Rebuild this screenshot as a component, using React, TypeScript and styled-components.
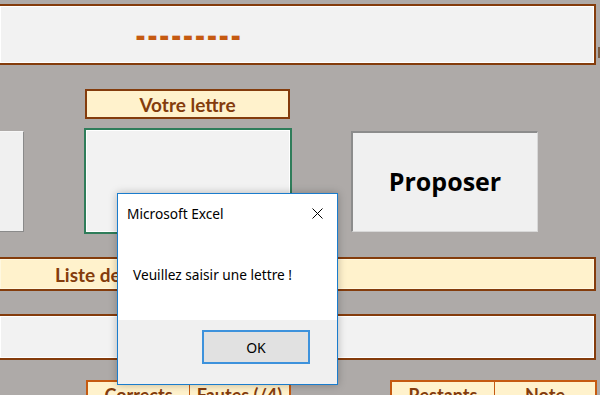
import React from "react";
import styled, { createGlobalStyle } from "styled-components";

const Global = createGlobalStyle`
  html, body { margin: 0; padding: 0; }
  body { background: #aeaaa8; font-family: "Open Sans", "Noto Sans", sans-serif; }
`;

const Sheet = styled.div`
  position: relative;
  width: 600px;
  height: 395px;
  overflow: hidden;
  background: #aeaaa8;
  padding-top: 4px;
  box-sizing: border-box;
`;

const WordPanel = styled.div`
  box-sizing: border-box;
  width: 598px;
  height: 61px;
  margin-left: -2px;
  background: #f2f2f2;
  border: 2px solid #843c0c;
  box-shadow: inset 0 0 0 1px #ffffff;
  padding-left: 136px;
  display: flex;
  align-items: center;
`;

const Dashes = styled.span`
  font-family: "Open Sans", sans-serif;
  font-weight: 800;
  font-size: 28px;
  letter-spacing: 3px;
  color: #c55a11;
  line-height: 1;
  margin-top: -2px;
`;

const EdgeMark = styled.div`
  position: absolute;
  right: 0;
  top: 47px;
  width: 2px;
  height: 11px;
  background: #7a5a40;
`;

const LabelRow = styled.div`
  margin-top: 24px;
  padding-left: 85px;
  display: flex;
`;

const Label = styled.div<{ $w: number }>`
  box-sizing: border-box;
  width: ${(p) => p.$w}px;
  height: 30px;
  background: #fff2cc;
  border: 2px solid #843c0c;
  color: #843c0c;
  font-family: "Lato", sans-serif;
  font-weight: 700;
  font-size: 19px;
  display: flex;
  align-items: center;
  justify-content: center;
`;

const InputRow = styled.div`
  margin-top: 9px;
  height: 106px;
  display: flex;
  align-items: center;
`;

const SideBox = styled.div`
  box-sizing: border-box;
  width: 24px;
  height: 101px;
  background: #f0f0f0;
  border: 1px solid #8a8a8a;
  border-left: none;
  border-top-color: #f7f7f7;
`;

const LetterInput = styled.div`
  box-sizing: border-box;
  margin-left: 60px;
  width: 208px;
  height: 106px;
  background: #f2f2f2;
  border: 2px solid #2f7d5a;
  box-shadow: inset 0 0 0 1px #ffffff;
`;

const ProposeButton = styled.button`
  box-sizing: border-box;
  margin-left: 59px;
  width: 187px;
  height: 101px;
  background: #f0f0f0;
  border: 1px solid #d8d8d8;
  border-top: 2px solid #8c8c8c;
  border-left: 2px solid #8c8c8c;
  font-family: "Open Sans", sans-serif;
  font-weight: 700;
  font-size: 25px;
  color: #000;
  padding: 0 0 2px 0;
`;

const WideBar = styled.div<{ $bg: string; $h: number; $mt: number }>`
  box-sizing: border-box;
  margin-top: ${(p) => p.$mt}px;
  margin-left: -2px;
  width: 598px;
  height: ${(p) => p.$h}px;
  background: ${(p) => p.$bg};
  border: 2px solid #843c0c;
  box-shadow: inset 0 0 0 1px ${(p) => (p.$bg === "#f2f2f2" ? "#ffffff" : "#fff8e0")};
  display: flex;
  align-items: center;
  padding-left: 55px;
  color: #843c0c;
  font-family: "Lato", sans-serif;
  font-weight: 700;
  font-size: 19px;
  white-space: nowrap;
`;

const StatsRow = styled.div`
  margin-top: 20px;
  display: flex;
  padding-left: 86px;
`;

const StatsTable = styled.div<{ $ml?: number }>`
  display: flex;
  margin-left: ${(p) => p.$ml || 0}px;
  border: 2px solid #c55a11;
  border-bottom: none;
  background: #fff2cc;
  height: 30px;
`;

const StatCell = styled.div<{ $w: number }>`
  box-sizing: border-box;
  width: ${(p) => p.$w}px;
  color: #843c0c;
  font-family: "Lato", sans-serif;
  font-weight: 700;
  font-size: 18px;
  line-height: 1;
  text-align: center;
  padding-top: 4px;
  & + & { border-left: 1px solid #c55a11; }
`;

const Dialog = styled.div`
  position: absolute;
  left: 117px;
  top: 193px;
  width: 221px;
  height: 192px;
  box-sizing: border-box;
  background: #ffffff;
  border: 1px solid #1a7ccd;
  box-shadow: 0 0 8px rgba(0, 0, 0, 0.25);
  display: flex;
  flex-direction: column;
  font-family: "Noto Sans", "Open Sans", sans-serif;
  color: #000;
`;

const TitleBar = styled.div`
  height: 38px;
  display: flex;
  align-items: center;
  justify-content: space-between;
  padding: 0 14px 0 9px;
  font-size: 13.7px;
`;

const CloseIcon = styled.svg`
  width: 11px;
  height: 11px;
`;

const Message = styled.div`
  flex: 1;
  padding: 33px 0 0 15px;
  font-size: 13.7px;
`;

const Footer = styled.div`
  height: 64px;
  background: #f0f0f0;
  display: flex;
  justify-content: flex-end;
  padding: 10px 27px 0 0;
  box-sizing: border-box;
`;

const OkButton = styled.button`
  box-sizing: border-box;
  width: 108px;
  height: 34px;
  background: #e1e1e1;
  border: 2px solid #3d92dc;
  font-family: "Noto Sans", "Open Sans", sans-serif;
  font-size: 14px;
  color: #000;
`;

export default function App() {
  return (
    <>
      <Global />
      <Sheet>
        <WordPanel>
          <Dashes>---------</Dashes>
        </WordPanel>
        <EdgeMark />
        <LabelRow>
          <Label $w={205}>Votre lettre</Label>
        </LabelRow>
        <InputRow>
          <SideBox />
          <LetterInput />
          <ProposeButton>Proposer</ProposeButton>
        </InputRow>
        <WideBar $bg="#fff2cc" $h={34} $mt={23}>Liste des lettres proposées</WideBar>
        <WideBar $bg="#f2f2f2" $h={46} $mt={23} />
        <StatsRow>
          <StatsTable>
            <StatCell $w={101}>Corrects</StatCell>
            <StatCell $w={100}>Fautes (/4)</StatCell>
          </StatsTable>
          <StatsTable $ml={99}>
            <StatCell $w={102}>Restants</StatCell>
            <StatCell $w={101}>Note</StatCell>
          </StatsTable>
        </StatsRow>
        <Dialog>
          <TitleBar>
            <span>Microsoft Excel</span>
            <CloseIcon viewBox="0 0 11 11">
              <path d="M0.5 0.5 L10.5 10.5 M10.5 0.5 L0.5 10.5" stroke="#000" strokeWidth="1" fill="none" />
            </CloseIcon>
          </TitleBar>
          <Message>Veuillez saisir une lettre !</Message>
          <Footer>
            <OkButton>OK</OkButton>
          </Footer>
        </Dialog>
      </Sheet>
    </>
  );
}
